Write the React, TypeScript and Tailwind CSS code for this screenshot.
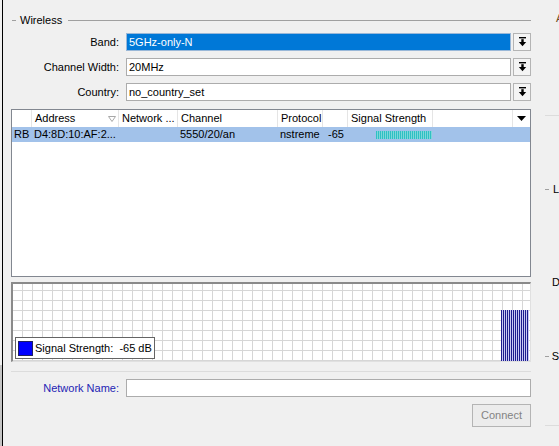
import React from "react";

const DropIcon = () => (
  <svg width="9" height="10" viewBox="0 0 9 10">
    <rect x="1" y="0" width="7" height="1.4" fill="#000" />
    <rect x="3.3" y="2.2" width="2.4" height="3" fill="#000" />
    <polygon points="0.8,5 8.2,5 4.5,9.2" fill="#000" />
  </svg>
);

const ComboRow = ({ label, value, selected }: { label: string; value: string; selected?: boolean }) => (
  <div className="flex items-center h-[18px]">
    <div className="w-[109px] shrink-0 text-right pr-px">{label}</div>
    <div
      className={
        "ml-[6px] w-[385px] shrink-0 h-[18px] border flex items-center px-[2px] " +
        (selected ? "bg-[#0078d7] border-[#9ab8d8] text-white" : "bg-white border-[#acacac] text-black")
      }
    >
      {value}
    </div>
    <div className="ml-[2px] w-[18px] shrink-0 h-[18px] border border-[#b4b4b4] bg-[#f4f4f4] flex items-center justify-center">
      <DropIcon />
    </div>
  </div>
);

const cols = [
  { w: "w-[20px]", head: "", cell: "RB" },
  { w: "w-[87px]", head: "Address", cell: "D4:8D:10:AF:2..." },
  { w: "w-[59px]", head: "Network ...", cell: "" },
  { w: "w-[100px]", head: "Channel", cell: "5550/20/an" },
  { w: "w-[45px]", head: "Protocol", cell: "nstreme" },
];

const App = () => {
  return (
    <div className="w-[559px] h-[446px] bg-[#f0f0f0] flex overflow-hidden text-[11px] leading-[13px] text-black font-['Segoe_UI','Liberation_Sans',Arial,sans-serif]">
      {/* left edge of the window behind */}
      <div className="w-[2px] shrink-0 flex flex-col">
        <div className="h-[365px]" />
        <div className="flex-1 bg-[#c4c4c4]" />
      </div>
      <div className="w-px shrink-0 bg-black" />

      {/* main panel */}
      <div className="w-[528px] shrink-0 pl-[8px] flex flex-col">
        {/* group header */}
        <div className="mt-[14px] h-[13px] flex items-center">
          <div className="ml-[1px] w-[4px] h-px bg-[#a0a0a0]" />
          <span className="ml-[4px]">Wireless</span>
          <div className="ml-[6px] flex-1 h-px bg-[#a0a0a0]" />
        </div>

        <div className="mt-[6px] flex flex-col gap-[7px]">
          <ComboRow label="Band:" value="5GHz-only-N" selected />
          <ComboRow label="Channel Width:" value="20MHz" />
          <ComboRow label="Country:" value="no_country_set" />
        </div>

        {/* table */}
        <div className="mt-[8px] w-[520px] h-[168px] border border-[#828790] bg-white flex flex-col">
          <div className="h-[17px] flex items-stretch">
            {cols.map((c, i) => (
              <div key={i} className={c.w + " shrink-0 border-r border-[#e5e5e5] px-[3px] flex items-center whitespace-nowrap overflow-hidden"}>
                {c.head}
                {c.head === "Address" && (
                  <svg className="ml-auto mr-[-1px]" width="8" height="6" viewBox="0 0 8 6">
                    <polygon points="0.5,0.5 7.5,0.5 4,5.5" fill="none" stroke="#a8a8a8" strokeWidth="1" />
                  </svg>
                )}
              </div>
            ))}
            <div className="w-[25px] shrink-0 border-r border-[#e5e5e5]" />
            <div className="w-[85px] shrink-0 border-r border-[#e5e5e5] px-[3px] flex items-center whitespace-nowrap">Signal Strength</div>
            <div className="flex-1 border-r border-[#e5e5e5]" />
            <div className="w-[17px] shrink-0 flex items-center justify-center">
              <svg width="9" height="6" viewBox="0 0 9 6">
                <polygon points="0,0 9,0 4.5,5" fill="#000" />
              </svg>
            </div>
          </div>
          <div className="h-[15px] bg-[#a2c2ea] flex items-center">
            {cols.map((c, i) => (
              <div key={i} className={c.w + " shrink-0 px-[2px] whitespace-nowrap overflow-hidden"}>
                {c.cell}
              </div>
            ))}
            <div className="w-[25px] shrink-0 text-right pr-[4px]">-65</div>
            <div className="w-[85px] shrink-0 pl-[28px] flex items-center">
              <div className="w-[56px] h-[8px] bg-[repeating-linear-gradient(to_right,#2ec0c4_0_1px,#7fd6d8_1px_2px)]" />
            </div>
          </div>
        </div>

        {/* graph */}
        <div className="mt-[5px] w-[520px] h-[80px] border-t-2 border-l-2 border-r border-b border-t-[#8a8a8a] border-l-[#8a8a8a] border-r-[#e0e0e0] border-b-[#e0e0e0] bg-white bg-[linear-gradient(to_right,#d6d6d6_1px,transparent_1px),linear-gradient(to_bottom,#d6d6d6_1px,transparent_1px)] bg-[size:10px_10px] bg-[position:9px_6px] flex items-end">
          <div className="ml-[2px] mb-[2px] h-[22px] px-[2px] border border-[#646464] bg-white flex items-center">
            <div className="w-[15px] h-[15px] bg-[#0000ff] border border-[#202060]" />
            <span className="ml-[2px] whitespace-pre">Signal Strength:  -65 dB</span>
          </div>
          <div className="ml-auto mr-[1px] w-[28px] h-[51px] bg-[repeating-linear-gradient(to_right,#1c1c8e_0_1px,#c9c9f2_1px_2px)]" />
        </div>

        <div className="mt-[9px] w-[520px] h-px bg-[#dcdcdc]" />

        <div className="mt-[7px] flex items-center h-[18px]">
          <div className="w-[109px] shrink-0 text-right pr-px text-[#2424b4]">Network Name:</div>
          <div className="ml-[6px] w-[405px] shrink-0 h-[18px] border border-[#acacac] bg-white" />
        </div>

        <div className="mt-[7px] w-[520px] flex justify-end">
          <button className="w-[59px] h-[23px] border border-[#b4b4b4] bg-[#ececec] text-[#838383] text-[11px] font-['Segoe_UI','Liberation_Sans',Arial,sans-serif]">
            Connect
          </button>
        </div>
      </div>

      {/* neighbouring group, clipped */}
      <div className="flex-1 min-w-0 overflow-hidden flex flex-col">
        <div className="mt-[12px] ml-[25px] text-[#6a4a20] whitespace-nowrap">A</div>
        <div className="mt-[90px] ml-[14px] h-px bg-[#dcdcdc]" />
        <div className="mt-[67px] ml-[14px] flex items-center whitespace-nowrap">
          <div className="w-[4px] h-px bg-[#a0a0a0]" />
          <span className="ml-[4px]">L</span>
        </div>
        <div className="mt-[80px] ml-[21px] whitespace-nowrap">D</div>
        <div className="mt-[61px] ml-[14px] flex items-center whitespace-nowrap">
          <div className="w-[4px] h-px bg-[#a0a0a0]" />
          <span className="ml-[3px]">S</span>
        </div>
        <div className="mt-[62px] ml-[14px] h-px bg-[#dcdcdc]" />
      </div>
    </div>
  );
};

export default App;
